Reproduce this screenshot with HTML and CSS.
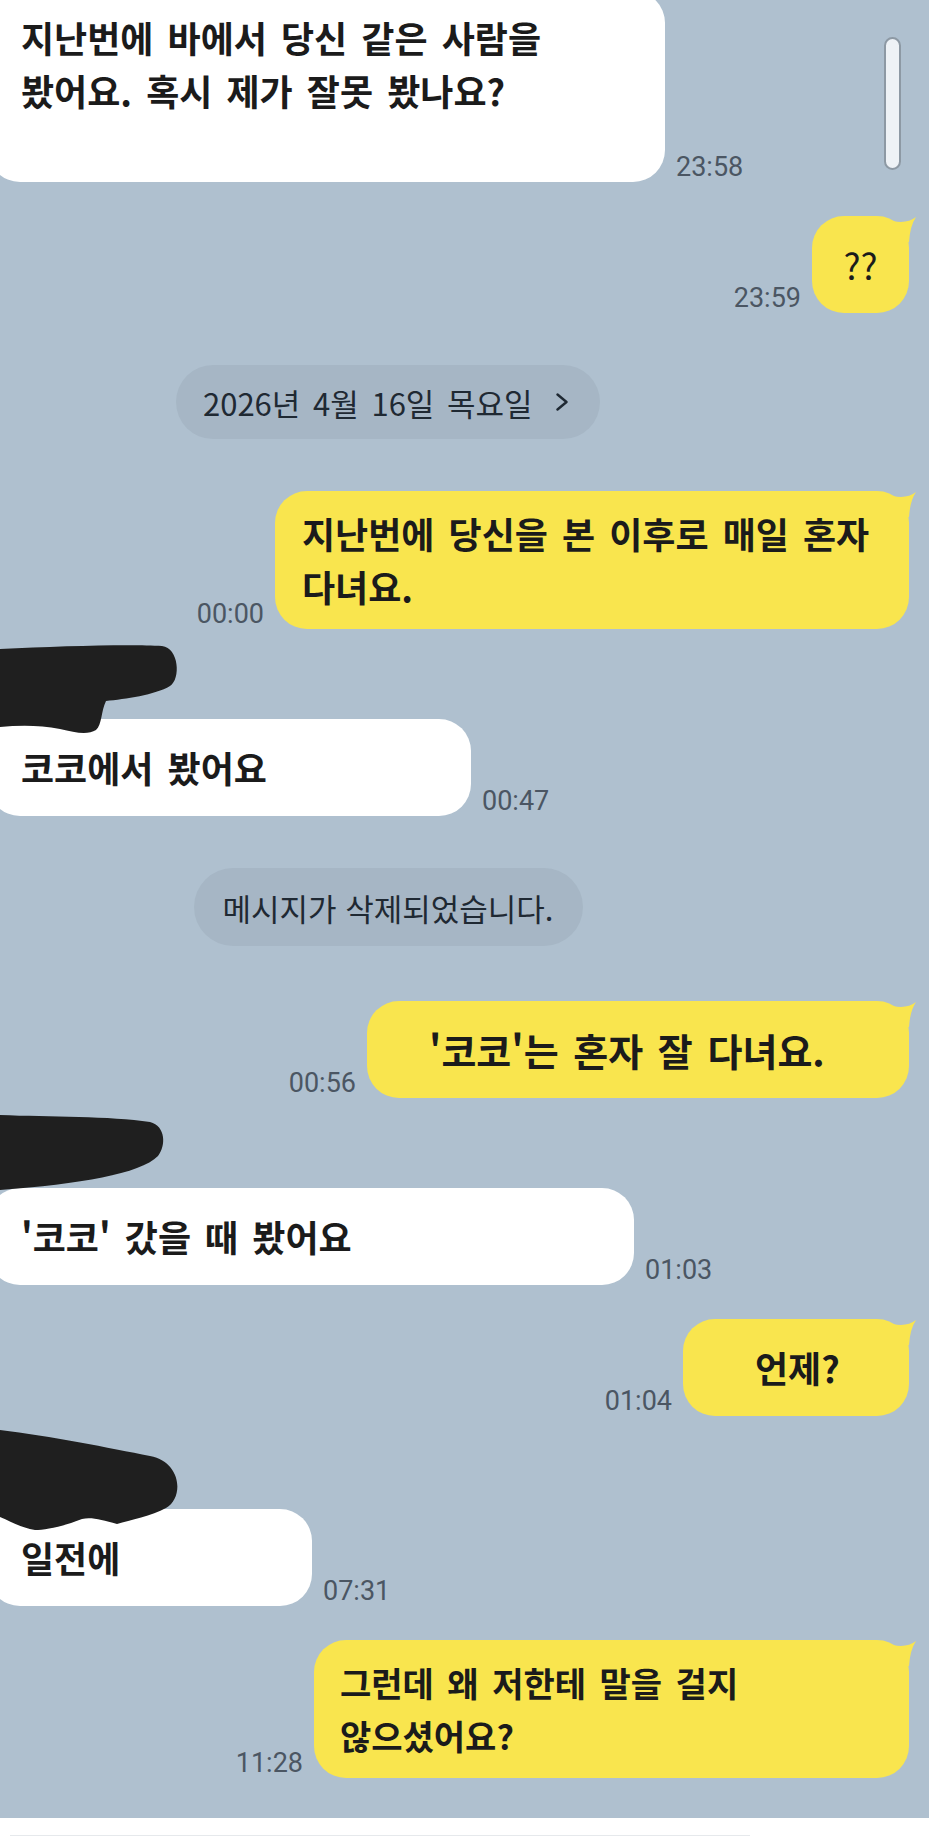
FILE: index.html
```html
<!DOCTYPE html>
<html lang="ko">
<head>
<meta charset="utf-8">
<title>채팅</title>
<link rel="stylesheet" href="styles.css">
</head>
<body>
<div class="screen">
  <main class="chat">
    <div class="row theirs top">
      <div class="bubble white w1 first">지난번에 바에서 당신 같은 사람을<br>봤어요. 혹시 제가 잘못 봤나요?<br>&nbsp;</div>
      <span class="time">23:58</span>
    </div>

    <div class="row mine gap-s">
      <span class="time">23:59</span>
      <div class="bubble yellow one yq">??</div>
    </div>

    <div class="row center gap-m">
      <div class="pill date">2026년 4월 16일 목요일<svg class="chev" width="14" height="18" viewBox="0 0 14 18"><path d="M2.5 1.5 L11.5 9 L2.5 16.5" fill="none" stroke="#1f2933" stroke-width="2.4" stroke-linecap="round" stroke-linejoin="round"/></svg></div>
    </div>

    <div class="row mine gap-m">
      <span class="time">00:00</span>
      <div class="bubble yellow y2">지난번에 당신을 본 이후로 매일 혼자<br>다녀요.</div>
    </div>

    <div class="group">
      <svg class="blob b1" width="190" height="106" viewBox="0 0 190 106"><path d="M0 20 C60 17 130 15 162 17 C179 19 181 50 170 57 C155 66 125 70 106 72 C101 82 102 96 96 101 C88 106 76 104 60 100 C40 96 20 96 0 98 Z" fill="#1f1f1f"/></svg>
      <div class="row theirs">
        <div class="bubble white one w2">코코에서 봤어요</div>
        <span class="time">00:47</span>
      </div>
    </div>

    <div class="row center gap-m">
      <div class="pill deleted">메시지가 삭제되었습니다.</div>
    </div>

    <div class="row mine gap-l">
      <span class="time">00:56</span>
      <div class="bubble yellow one y3">'코코'는 혼자 잘 다녀요.</div>
    </div>

    <div class="group">
      <svg class="blob b2" width="190" height="96" viewBox="0 0 190 96"><path d="M0 17 C50 19 110 18 150 24 C166 28 166 48 158 58 C140 76 80 86 0 92 Z" fill="#1f1f1f"/></svg>
      <div class="row theirs">
        <div class="bubble white one w3">'코코' 갔을 때 봤어요</div>
        <span class="time">01:03</span>
      </div>
    </div>

    <div class="row mine gap-s">
      <span class="time">01:04</span>
      <div class="bubble yellow one y4">언제?</div>
    </div>

    <div class="group">
      <svg class="blob b3" width="190" height="116" viewBox="0 0 190 116"><path d="M0 14 C50 20 110 32 150 40 C182 46 184 82 166 92 C152 100 130 104 117 108 C102 104 92 101 82 103 C62 111 45 114 35 114 C22 112 12 106 0 101 Z" fill="#1f1f1f"/></svg>
      <div class="row theirs">
        <div class="bubble white one w4">일전에</div>
        <span class="time">07:31</span>
      </div>
    </div>

    <div class="row mine gap-s">
      <span class="time">11:28</span>
      <div class="bubble yellow y5">그런데 왜 저한테 말을 걸지<br>않으셨어요?</div>
    </div>
  </main>
  <div class="scrollbar"></div>
  <footer class="footer"><div class="input-line"></div></footer>
</div>
</body>
</html>
```

FILE: styles.css
```css
html, body {
  margin: 0;
  padding: 0;
}

body {
  width: 929px;
  height: 1836px;
  overflow: hidden;
  background: #afc0cf;
  font-family: "Noto Sans CJK KR", "Noto Sans", sans-serif;
}

.screen {
  position: relative;
  width: 929px;
  height: 1836px;
  display: flex;
  flex-direction: column;
}

.chat {
  height: 1818px;
  overflow: hidden;
  display: flex;
  flex-direction: column;
  background: #afc0cf;
}

.row {
  display: flex;
  align-items: flex-end;
  gap: 11px;
}

.top { margin-top: -9px; }
.gap-s { margin-top: 34px; }
.gap-m { margin-top: 52px; }
.gap-l { margin-top: 55px; }

.mine {
  justify-content: flex-end;
  padding-right: 20px;
}

.theirs {
  margin-left: -12px;
}

.center {
  justify-content: center;
  padding-right: 153px;
}

.bubble {
  position: relative;
  box-sizing: border-box;
  padding: 16px 0;
  border-radius: 32px;
  font-family: "Noto Sans CJK KR", sans-serif;
  font-weight: 700;
  font-size: 36px;
  line-height: 53px;
  word-spacing: 4px;
  color: #1b1b1b;
  white-space: nowrap;
}

.bubble.one {
  padding-top: 22px;
  padding-bottom: 22px;
}

.bubble.first {
  padding-top: 20px;
  padding-bottom: 12px;
}

.white {
  background: #ffffff;
  padding-left: 33px;
}

.yellow {
  background: #f9e54e;
}

.yellow::after {
  content: "";
  position: absolute;
  top: 0;
  right: -8px;
  width: 24px;
  height: 26px;
  background: #f9e54e;
  clip-path: path("M0 5 Q14 8 23 1 Q17 10 16 26 L0 26 Z");
}

.w1 { width: 677px; }
.w2 { width: 483px; }
.w3 { width: 646px; }
.w4 { width: 324px; }

.yq {
  width: 97px;
  text-align: center;
  font-weight: 400;
  word-spacing: 0;
}
.y2 { width: 634px; padding-left: 27px; }
.y3 { width: 542px; padding-left: 62px; font-size: 38px; }
.y4 { width: 226px; padding-left: 72px; }
.y5 { width: 595px; padding-left: 26px; font-size: 34px; }

.time {
  font-family: Roboto, "Noto Sans", sans-serif;
  font-size: 27px;
  line-height: 27px;
  color: #4b5663;
  margin-bottom: 1px;
  white-space: nowrap;
}

.pill {
  display: flex;
  align-items: center;
  box-sizing: border-box;
  height: 74px;
  border-radius: 37px;
  background: #a6b6c5;
  font-family: "Noto Sans CJK KR", sans-serif;
  font-size: 31px;
  color: #1f2933;
  word-spacing: 4px;
  white-space: nowrap;
}

.date {
  width: 424px;
  padding-left: 27px;
  gap: 22px;
}

.deleted {
  width: 389px;
  height: 78px;
  border-radius: 39px;
  justify-content: center;
  word-spacing: 0;
}

.group {
  display: flex;
  flex-direction: column;
}

.blob {
  display: block;
  position: relative;
  z-index: 1;
}

.b1 { margin-bottom: -16px; }
.b2 { margin-bottom: -6px; }
.b3 { margin-bottom: -23px; }

.scrollbar {
  position: absolute;
  left: 884px;
  top: 37px;
  width: 17px;
  height: 133px;
  box-sizing: border-box;
  border: 2px solid #8d99a4;
  border-radius: 9px;
  background: #eef2f6;
}

.footer {
  flex: 1;
  background: #ffffff;
  display: flex;
  flex-direction: column;
  justify-content: flex-end;
}

.input-line {
  margin-left: 10px;
  width: 740px;
  height: 1px;
  background: #e6e9ec;
}
```
